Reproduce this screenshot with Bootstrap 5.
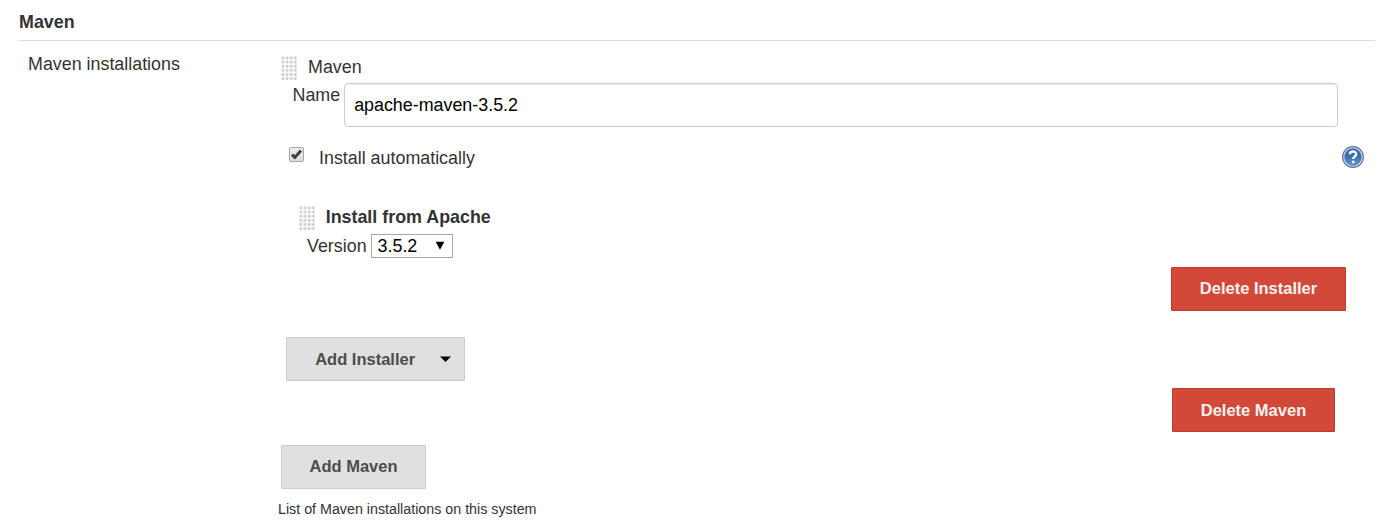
<!DOCTYPE html>
<html lang="en">
<head>
<meta charset="utf-8">
<title>Maven</title>
<link href="https://cdn.jsdelivr.net/npm/bootstrap@5.3.0/dist/css/bootstrap.min.css" rel="stylesheet">
<style>
body{font-family:"Liberation Sans",Arial,sans-serif;font-size:17.875px;line-height:24px;color:#333;background:#fff;overflow:hidden}
.section{padding:0 7px 0 19px}
.section-title{height:41px;padding-top:10px;font-size:17.875px;font-weight:700;line-height:24px;border-bottom:1px solid #ddd;margin:0}
.label-col{width:259px;padding:11px 0 0 9px}
.fields{min-width:0}
.head-row{height:42px;padding:14px 0 0 3px}
.head-row .grip{margin:1px 11px 0 0}
.name-row{padding:0 37px 0 14.5px;height:44px;gap:3.5px}
.name-input{height:44px;border:1px solid #ccc;border-radius:4px;padding:0 9.5px;font-size:17.875px;color:#000;box-shadow:inset 0 1px 1px rgba(0,0,0,.075)}
.auto-row{margin-top:18px;height:24px;padding:0 10px 0 11px}
.auto-row span{padding-top:1px}
.tick{margin:2px 15px 0 0}
.installer-head{margin-top:35px;height:30px;padding-left:21px}
.installer-head span{padding-top:1px}
.installer-head .grip{margin:2px 10.7px 0 0}
.version-row{height:24px;padding-left:29px;gap:4px}
.version-select{width:82px;height:24px;border:1px solid #a9a9a9;border-radius:0;padding:0 0 0 6px;font-size:17.875px;line-height:22px;color:#000;background:#fff;appearance:none}
.select-box{position:relative}
.select-box svg{position:absolute;right:8px;top:7px;pointer-events:none}
.action{height:44px;border-radius:1px;padding:0 27.5px;font-size:16.5px;font-weight:700;line-height:42px;border-width:1px}
.action-red,.action-red:hover{color:#f2f2f2;background:#d24939;border-color:#be3a2c}
.action-grey,.action-grey:hover{color:#4d4d4d;background:#e0e0e0;border-color:#ccc}
.remove-installer{margin:9px 29px 0 0}
.remove-installer .action{width:175px;line-height:40px;padding-top:0;padding-bottom:2px}
.add-installer{margin:26px 0 0 8px}
.add-installer .action{width:179px;padding:0 13px 0 28.2px}
.remove-maven{margin:7px 40px 0 0}
.remove-maven .action{width:163px}
.add-maven{margin:13px 0 0 3px}
.add-maven .action{line-height:40px;padding-bottom:2px}
.hint{font-size:14.27px;line-height:20px;margin-top:10px}
</style>
</head>
<body>
<svg width="0" height="0" class="position-absolute">
  <defs>
    <linearGradient id="dotg" x1="0" y1="0" x2="1" y2="1"><stop offset=".1" stop-color="#f6f6f3"/><stop offset="1" stop-color="#a2a29e"/></linearGradient>
    <linearGradient id="helpg" x1="0" y1="0" x2="0" y2="1"><stop offset="0" stop-color="#3564a5"/><stop offset=".5" stop-color="#416fae"/><stop offset="1" stop-color="#6a98cd"/></linearGradient>
    <linearGradient id="boxg" x1="0" y1="0" x2="0" y2="1"><stop offset="0" stop-color="#eee"/><stop offset="1" stop-color="#dadada"/></linearGradient>
    <pattern id="dots" width="4.12" height="4.12" patternUnits="userSpaceOnUse"><rect x=".2" y=".2" width="2.8" height="2.8" fill="url(#dotg)"/></pattern>
    <symbol id="grip" viewBox="0 0 16 24"><rect width="16" height="24" fill="url(#dots)"/></symbol>
  </defs>
</svg>
<main class="section">
  <h1 class="section-title">Maven</h1>
  <div class="d-flex">
    <div class="label-col flex-shrink-0">Maven installations</div>
    <div class="fields flex-grow-1">
      <div class="head-row d-flex"><svg class="grip" width="16" height="24"><use href="#grip"/></svg><span>Maven</span></div>
      <div class="name-row d-flex"><label for="name">Name</label><input id="name" class="name-input form-control" type="text" value="apache-maven-3.5.2"></div>
      <div class="auto-row d-flex">
        <svg class="tick" width="15" height="15" viewBox="0 0 15 15"><rect x=".5" y=".5" width="14" height="14" rx="1.5" fill="url(#boxg)" stroke="#a6a6a6"/><path d="M3 7.6L5.9 10.4L12 3.6" fill="none" stroke="#3d3d3d" stroke-width="3"/></svg>
        <span class="me-auto">Install automatically</span>
        <svg width="24" height="24" viewBox="0 0 24 24"><circle cx="12" cy="12" r="10.4" fill="#c9d7ea" stroke="#5577a8" stroke-width="1.2"/><circle cx="12" cy="12" r="8.2" fill="url(#helpg)" stroke="#305d9b" stroke-width=".7"/><path d="M8.8 9.3C8.9 5.7 15.2 5.5 15.2 9.2C15.2 11.5 12.2 11.6 12.2 14.1" fill="none" stroke="#f4f7fb" stroke-width="2.4"/><circle cx="12.2" cy="17" r="1.4" fill="#f4f7fb"/></svg>
      </div>
      <div class="installer-head d-flex fw-bold"><svg class="grip" width="16" height="24"><use href="#grip"/></svg><span>Install from Apache</span></div>
      <div class="version-row d-flex"><label for="version">Version</label><div class="select-box"><select id="version" class="version-select d-block"><option>3.5.2</option></select><svg width="10" height="9" viewBox="0 0 10 9"><path d="M.7.7H9.3L5 8.7Z" fill="#000"/></svg></div></div>
      <div class="remove-installer d-flex justify-content-end"><button type="button" class="btn action action-red">Delete Installer</button></div>
      <div class="add-installer d-flex"><button type="button" class="btn action action-grey text-nowrap d-flex align-items-center justify-content-between">Add Installer<svg width="11" height="6" viewBox="0 0 11 6"><path d="M0 .5H11L5.5 6Z" fill="#000"/></svg></button></div>
      <div class="remove-maven d-flex justify-content-end"><button type="button" class="btn action action-red">Delete Maven</button></div>
      <div class="add-maven d-flex"><button type="button" class="btn action action-grey">Add Maven</button></div>
      <div class="hint">List of Maven installations on this system</div>
    </div>
  </div>
</main>
<script src="https://cdn.jsdelivr.net/npm/bootstrap@5.3.0/dist/js/bootstrap.bundle.min.js"></script>
</body>
</html>
